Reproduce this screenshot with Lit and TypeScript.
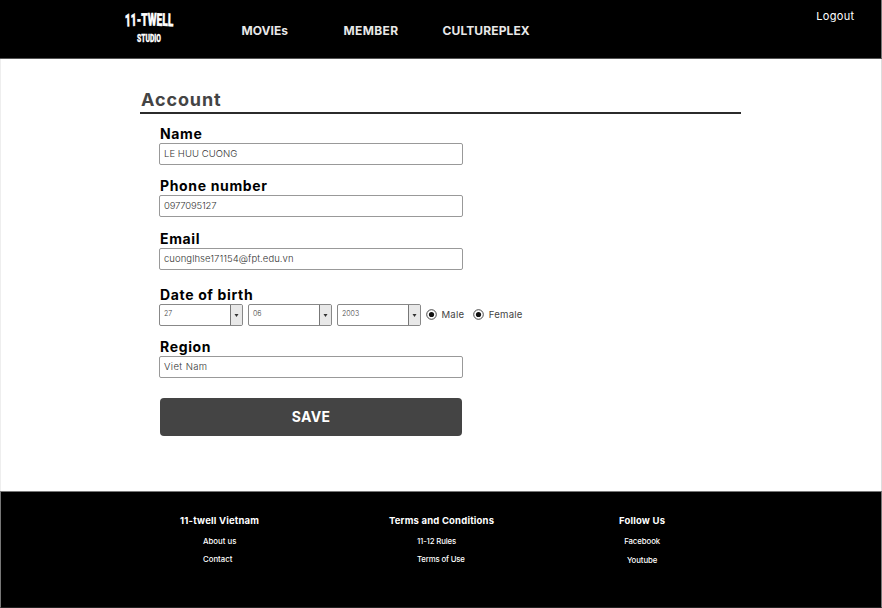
import { LitElement, html, css } from "lit";
import { customElement, property } from "lit/decorators.js";

@customElement("studio-logo")
class StudioLogo extends LitElement {
  static styles = css`
    :host { display: block; width: 50px; height: 36px; }
    svg { display: block; overflow: visible; }
    text { font-family: "Roboto", sans-serif; font-weight: 900; fill: #fff; stroke: #fff; }
    .name { font-size: 17.5px; stroke-width: 0.5px; }
    .sub { font-size: 11px; stroke-width: 0.3px; }
  `;
  render() {
    return html`<svg width="50" height="36" viewBox="0 0 50 36">
      <defs><path id="arch" d="M0 15.4Q39 13.8 80 15.4" /></defs>
      <g transform="translate(1 0) scale(0.62 1)">
        <text class="name"><textPath href="#arch" textLength="78" lengthAdjust="spacingAndGlyphs">11-TWELL</textPath></text>
      </g>
      <text class="sub" x="13" y="30.5" textLength="24" lengthAdjust="spacingAndGlyphs">STUDIO</text>
    </svg>`;
  }
}

@customElement("text-field")
class TextField extends LitElement {
  @property() label = "";
  @property() value = "";
  static styles = css`
    :host { display: block; }
    .label { height: 20px; line-height: 21px; padding-left: 1px; font-size: 14px; font-weight: 700; color: #000; letter-spacing: 0.65px; white-space: nowrap; }
    .box { box-sizing: border-box; width: 304px; height: 22px; border: 1px solid #999; border-radius: 2px; padding-left: 4px; line-height: 20px; font-size: 9.5px; font-weight: 300; color: #333; letter-spacing: var(--value-spacing, 0.06px); white-space: nowrap; }
  `;
  render() {
    return html`<div class="label">${this.label}</div>
      <slot><div class="box">${this.value}</div></slot>`;
  }
}

@customElement("date-select")
class DateSelect extends LitElement {
  @property() value = "";
  static styles = css`
    :host { display: flex; box-sizing: border-box; width: 84px; height: 22px; border: 1px solid #888; border-radius: 2px; overflow: hidden; }
    .value { flex: 1; padding-left: 4px; line-height: 18px; font-size: 7px; font-weight: 300; color: #444; }
    .arrow { display: flex; align-items: center; justify-content: center; width: 11px; border-left: 1px solid #777; background: #e8e8e8; }
    svg { display: block; }
  `;
  render() {
    return html`<span class="value">${this.value}</span>
      <span class="arrow"><svg width="5" height="3" viewBox="0 0 5 3"><path d="M.5 0h4L2.5 3z" fill="#333" /></svg></span>`;
  }
}

@customElement("radio-option")
class RadioOption extends LitElement {
  @property() label = "";
  static styles = css`
    :host { display: flex; align-items: center; height: 21px; font-size: 9.6px; font-weight: 400; color: #444; }
    svg { display: block; margin-right: 5px; }
    span { letter-spacing: 0.2px; }
  `;
  render() {
    return html`<svg width="11" height="11" viewBox="0 0 11 11">
        <circle cx="5.5" cy="5.5" r="4.8" fill="#fff" stroke="#333" stroke-width="0.9" />
        <circle cx="5.5" cy="5.5" r="2.6" fill="#111" />
      </svg><span>${this.label}</span>`;
  }
}

@customElement("app-root")
class AppRoot extends LitElement {
  static styles = css`
    :host { display: flex; flex-direction: column; width: 882px; height: 608px; overflow: hidden; background: #fff; font-family: "Inter", sans-serif; }
    header { display: flex; box-sizing: border-box; height: 59px; flex: none; background: #000; border-bottom: 1px solid #555; border-right: 1px solid #777; color: #e8e8e8; }
    studio-logo { margin: 11px 0 0 124px; }
    nav { display: flex; padding-top: 21px; }
    nav a { font-size: 12px; line-height: 20px; font-weight: 700; white-space: nowrap; }
    .movies { width: 102px; margin-left: 67.5px; letter-spacing: 0.05px; }
    .member { width: 99px; letter-spacing: 0.35px; }
    .culture { letter-spacing: 0.12px; }
    .logout { margin: 6px 26.5px 0 auto; font-size: 11px; line-height: 20px; color: #fff; letter-spacing: 0.35px; }
    main { box-sizing: border-box; height: 432px; flex: none; border-left: 1px solid #eee; border-right: 1px solid #ddd; overflow: hidden; }
    h1 { box-sizing: border-box; width: 601px; height: 31px; margin: 24px 0 9px 139px; padding-left: 1px; padding-top: 5px; border-bottom: 2px solid #2b2b2b; font-size: 18px; line-height: 24px; font-weight: 700; color: #444; letter-spacing: 0.9px; }
    form { margin-left: 158px; }
    .phone { margin-top: 10px; --value-spacing: -0.18px; }
    .email { margin-top: 11px; }
    .birth { margin-top: 14px; }
    .region { margin-top: 10px; --value-spacing: 0.4px; }
    .row { display: flex; gap: 5px; }
    .male { margin-left: -0.5px; }
    .female { margin-left: 3.5px; }
    button { display: block; width: 302px; height: 38px; margin: 19.5px 0 0 1px; padding: 0; border: 0; border-radius: 4px; background: #444; color: #fff; font: 700 14px/37px "Inter", sans-serif; letter-spacing: 0.3px; }
    footer { box-sizing: border-box; display: flex; height: 117px; flex: none; padding-top: 19px; background: #000; color: #fff; border: 1px solid #777; border-bottom-color: #222; font-size: 7.8px; font-weight: 500; line-height: 18px; white-space: nowrap; }
    h2 { margin: 0 0 1px; font-size: 9.5px; line-height: 20px; font-weight: 700; letter-spacing: 0.18px; }
    .col p { margin: 0; }
    .about { width: 209px; margin-left: 179px; }
    .terms { width: 230px; }
    .about p { padding-left: 23px; }
    .terms p { padding-left: 28px; letter-spacing: -0.16px; }
    .follow p { text-align: center; letter-spacing: -0.08px; }
    .follow p:last-child { line-height: 20px; }
  `;
  render() {
    return html`
      <header>
        <studio-logo></studio-logo>
        <nav><a class="movies">MOVIEs</a><a class="member">MEMBER</a><a class="culture">CULTUREPLEX</a></nav>
        <a class="logout">Logout</a>
      </header>
      <main>
        <h1>Account</h1>
        <form>
          <text-field class="name" label="Name" value="LE HUU CUONG"></text-field>
          <text-field class="phone" label="Phone number" value="0977095127"></text-field>
          <text-field class="email" label="Email" value="cuonglhse171154@fpt.edu.vn"></text-field>
          <text-field class="birth" label="Date of birth">
            <div class="row">
              ${["27", "06", "2003"].map((v) => html`<date-select value=${v}></date-select>`)}
              <radio-option class="male" label="Male"></radio-option>
              <radio-option class="female" label="Female"></radio-option>
            </div>
          </text-field>
          <text-field class="region" label="Region" value="Viet Nam"></text-field>
          <button type="button">SAVE</button>
        </form>
      </main>
      <footer>
        <div class="col about"><h2>11-twell Vietnam</h2><p>About us</p><p>Contact</p></div>
        <div class="col terms"><h2>Terms and Conditions</h2><p>11-12 Rules</p><p>Terms of Use</p></div>
        <div class="col follow"><h2>Follow Us</h2><p>Facebook</p><p>Youtube</p></div>
      </footer>
    `;
  }
}
